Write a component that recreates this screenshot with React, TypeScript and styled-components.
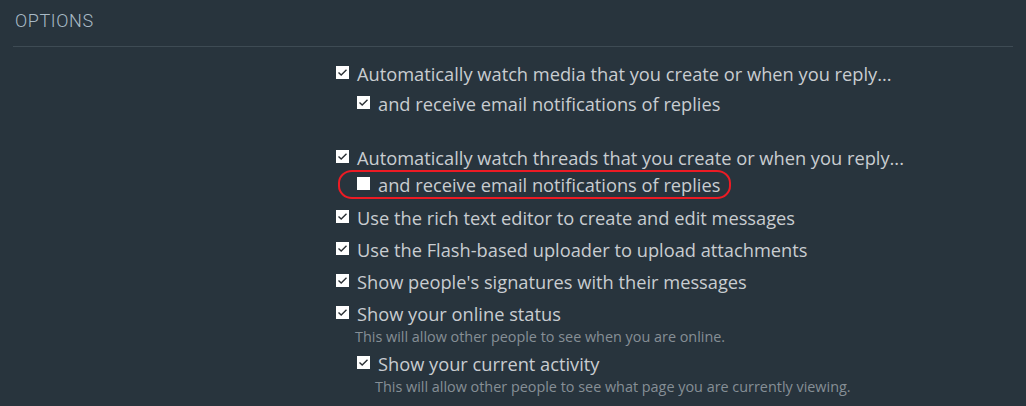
import React from "react";
import styled, { createGlobalStyle } from "styled-components";

const Global = createGlobalStyle`
  html, body { margin: 0; padding: 0; background: #28343d; }
  body { width: 1026px; height: 406px; overflow: hidden; }
`;

const Page = styled.div`
  background: #28343d;
  width: 1026px;
  height: 406px;
  padding: 0 13px;
  box-sizing: border-box;
  font-family: "Open Sans", "Noto Sans", sans-serif;
`;

const Header = styled.h3`
  margin: 0;
  padding: 9px 2px 0;
  height: 47px;
  box-sizing: border-box;
  font-family: "Roboto", sans-serif;
  font-weight: 300;
  font-size: 18px;
  line-height: 24px;
  letter-spacing: 0.6px;
  color: #a9bac6;
  border-bottom: 1px solid #3e4b54;
  width: 1000px;
`;

const List = styled.ul`
  list-style: none;
  margin: 0;
  padding: 15px 0 0 323px;
`;

const Group = styled.li<{ $gap?: number }>`
  margin-top: ${(p) => p.$gap ?? 0}px;
`;

const Row = styled.div<{ $indent?: boolean }>`
  position: relative;
  display: flex;
  align-items: flex-start;
  gap: 8px;
  margin-left: ${(p) => (p.$indent ? 21 : 0)}px;
`;

const Box = styled.span`
  flex: none;
  width: 13px;
  height: 13px;
  margin-top: 4px;
  background: #ffffff;
  display: flex;
  align-items: center;
  justify-content: center;
`;

const Label = styled.span`
  font-size: 18.25px;
  line-height: 24px;
  color: #c9cdd1;
  white-space: nowrap;
`;

const Hint = styled.div<{ $indent?: boolean }>`
  margin-left: ${(p) => (p.$indent ? 39 : 19)}px;
  font-size: 14.4px;
  line-height: 22px;
  color: #868f96;
  white-space: nowrap;
`;

const Highlight = styled.span`
  position: absolute;
  left: -19px;
  top: -3px;
  width: 389px;
  height: 25px;
  border: 2.5px solid #ec1b24;
  border-radius: 14px / 13px;
  pointer-events: none;
`;

const Nested = styled.div<{ $gap: number }>`
  margin-top: ${(p) => p.$gap}px;
`;

const Check = () => (
  <svg width="11" height="11" viewBox="0 0 11 11">
    <path d="M1.5 5.5 L4.2 8 L9.5 2.8" fill="none" stroke="#2b3035" strokeWidth="1.4" />
  </svg>
);

const Option: React.FC<{ checked?: boolean; indent?: boolean; highlight?: boolean; children: React.ReactNode }> = ({
  checked = true,
  indent,
  highlight,
  children,
}) => (
  <Row $indent={indent}>
    {highlight && <Highlight />}
    <Box>{checked && <Check />}</Box>
    <Label>{children}</Label>
  </Row>
);

export default function App() {
  return (
    <>
      <Global />
      <Page>
        <Header>OPTIONS</Header>
        <List>
          <Group>
            <Option>Automatically watch media that you create or when you reply...</Option>
            <Nested $gap={6}>
              <Option indent>and receive email notifications of replies</Option>
            </Nested>
          </Group>
          <Group $gap={30}>
            <Option>Automatically watch threads that you create or when you reply...</Option>
            <Nested $gap={3}>
              <Option indent checked={false} highlight>
                and receive email notifications of replies
              </Option>
            </Nested>
          </Group>
          <Group $gap={9}>
            <Option>Use the rich text editor to create and edit messages</Option>
          </Group>
          <Group $gap={8}>
            <Option>Use the Flash-based uploader to upload attachments</Option>
          </Group>
          <Group $gap={8}>
            <Option>Show people's signatures with their messages</Option>
          </Group>
          <Group $gap={8}>
            <Option>Show your online status</Option>
            <Hint>This will allow other people to see when you are online.</Hint>
            <Nested $gap={4}>
              <Option indent>Show your current activity</Option>
              <Hint $indent>This will allow other people to see what page you are currently viewing.</Hint>
            </Nested>
          </Group>
        </List>
      </Page>
    </>
  );
}
